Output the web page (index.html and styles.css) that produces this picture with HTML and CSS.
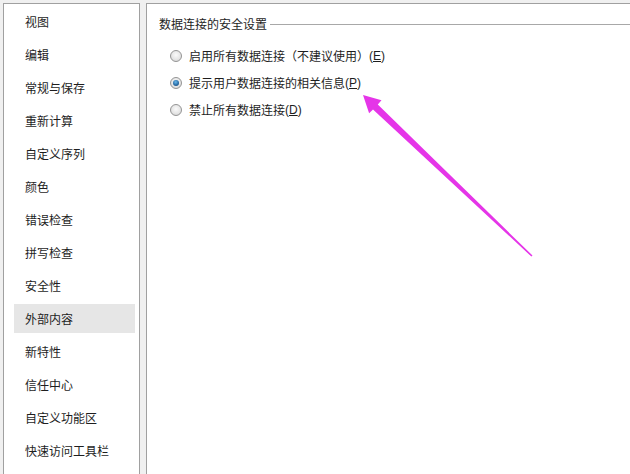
FILE: index.html
```html
<!DOCTYPE html>
<html lang="zh-CN">
<head>
  <meta charset="UTF-8">
  <title>Excel 选项 - 外部内容</title>
  <link rel="stylesheet" href="styles.css">
</head>
<body>
  <div class="dialog">
    <ul class="nav">
      <li>视图</li>
      <li>编辑</li>
      <li>常规与保存</li>
      <li>重新计算</li>
      <li>自定义序列</li>
      <li>颜色</li>
      <li>错误检查</li>
      <li>拼写检查</li>
      <li>安全性</li>
      <li class="active">外部内容</li>
      <li>新特性</li>
      <li>信任中心</li>
      <li>自定义功能区</li>
      <li>快速访问工具栏</li>
    </ul>

    <div class="pane">
      <div class="group-title">
        <span>数据连接的安全设置</span>
        <span class="rule"></span>
      </div>
      <label class="option"><span class="radio"></span>启用所有数据连接（不建议使用）<span class="key">(<u>E</u>)</span></label>
      <label class="option"><span class="radio checked"></span>提示用户数据连接的相关信息<span class="key">(<u>P</u>)</span></label>
      <label class="option"><span class="radio"></span>禁止所有数据连接<span class="key">(<u>D</u>)</span></label>
    </div>

    <!-- annotation arrow pointing at the selected option -->
    <svg class="arrow" width="176" height="168" viewBox="360 92 176 168">
      <polygon points="363,95 381.5,100.2 377.8,104.4 532.5,255.6 531.4,256.6 373,109.4 369.1,113.2" fill="#e535e8"/>
    </svg>
  </div>
</body>
</html>
```

FILE: styles.css
```css
body {
  margin: 0;
  background: #f0f0f0;
  font-family: "Noto Sans CJK SC", "Microsoft YaHei", sans-serif;
  font-size: 12px;
  color: #1e1e1e;
}

.dialog {
  position: relative;
  display: flex;
  gap: 6px;
  height: 474px;
  padding: 3px 0 0 3px;
  box-sizing: border-box;
  overflow: hidden;
}

.nav {
  width: 137px;
  box-sizing: border-box;
  margin: 0;
  padding: 3px 4px 0 10px;
  list-style: none;
  background: #fff;
  border: 1px solid #a0a0a0;
  border-bottom: none;
  display: flex;
  flex-direction: column;
  gap: 4px;
}

.nav li {
  height: 29px;
  line-height: 29px;
  padding-left: 11px;
  white-space: nowrap;
}

.nav li.active {
  background: #e6e6e6;
}

.pane {
  flex: 1;
  background: #fff;
  border-top: 1px solid #a0a0a0;
  border-left: 1px solid #a0a0a0;
  padding: 12px 0 0 12px;
}

.group-title {
  display: flex;
  align-items: center;
  gap: 3px;
  height: 16px;
  line-height: 16px;
  margin-bottom: 10px;
}

.group-title .rule {
  flex: 1;
  height: 1px;
  background: #a8a8a8;
}

.option {
  display: flex;
  align-items: center;
  gap: 7px;
  height: 27px;
  margin-left: 11px;
  white-space: nowrap;
}

.option .key {
  margin-left: -7px;
  font-family: "Liberation Sans", "Noto Sans", sans-serif;
}

.option u {
  text-underline-offset: 1px;
}

.radio {
  position: relative;
  width: 12px;
  height: 12px;
  box-sizing: border-box;
  border-radius: 50%;
  border: 1px solid #949494;
  background: radial-gradient(circle at 50% 40%, #fafafa 0%, #e6e6e6 55%, #cfcfcf 100%);
  flex-shrink: 0;
}

.radio.checked::after {
  content: "";
  position: absolute;
  left: 2px;
  top: 2px;
  width: 6px;
  height: 6px;
  border-radius: 50%;
  background: radial-gradient(circle at 45% 35%, #6ab8ea 0%, #2a6ea8 55%, #153f66 100%);
}

.arrow {
  position: absolute;
  left: 360px;
  top: 92px;
  pointer-events: none;
}
```
